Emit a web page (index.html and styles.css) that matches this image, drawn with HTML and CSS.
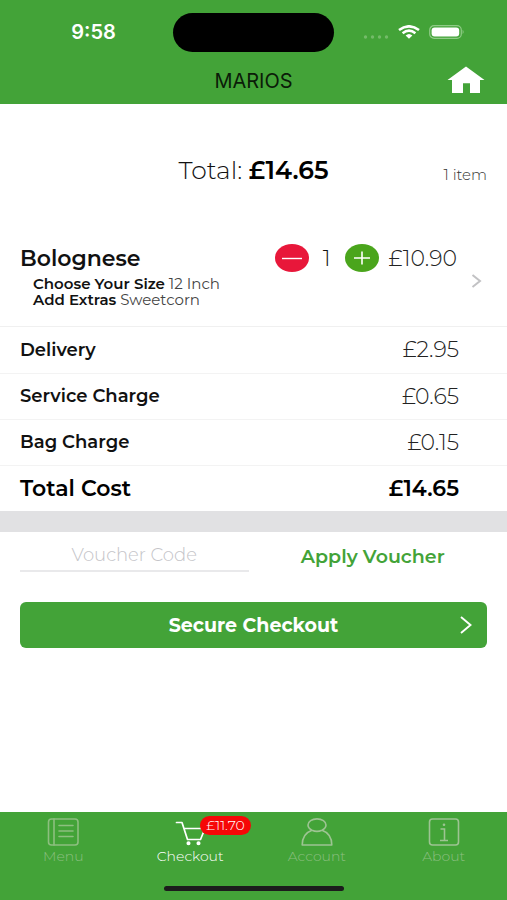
FILE: index.html
```html
<!DOCTYPE html>
<html lang="en">
<head>
<meta charset="utf-8">
<meta name="viewport" content="width=device-width, initial-scale=1">
<title>Marios – Checkout</title>
<link rel="stylesheet" href="styles.css">
</head>
<body>
<header class="top">
  <div class="status">
    <span class="time">9:58</span>
    <span class="island"></span>
    <span class="signals">
      <svg width="26" height="6" viewBox="0 0 26 6" fill="#74bb69"><circle cx="2.5" cy="3" r="1.7"/><circle cx="9.5" cy="3" r="1.7"/><circle cx="16.5" cy="3" r="1.7"/><circle cx="23.5" cy="3" r="1.7"/></svg>
      <svg class="wifi" width="22" height="14" viewBox="0 0 22 14" fill="none" stroke="#fff" stroke-width="2.6"><path d="M1 5Q11-2.4 21 5"/><path d="M4.6 8.2Q11 3.2 17.4 8.2"/><path d="M7.6 10.4Q11 7.4 14.4 10.4L11 13.8Z" fill="#fff" stroke="none"/></svg>
      <svg width="36" height="14" viewBox="0 0 36 14"><rect x=".7" y=".7" width="31.6" height="12.6" rx="4.4" fill="none" stroke="#8fcb86" stroke-width="1.2"/><rect x="2.6" y="2.4" width="27.6" height="9.2" rx="3" fill="#fff"/><path d="M33.6 4.8Q35.6 7 33.6 9.2Z" fill="#8fcb86"/></svg>
    </span>
  </div>
  <div class="titlebar">
    <h1>MARIOS</h1>
    <a class="home" href="#home" aria-label="Home">
      <svg width="38" height="28" viewBox="0 0 38 28" fill="#fff"><path d="M19 .5L37.5 14H33V27H23V17.2H16V27H5V14H.5Z"/></svg>
    </a>
  </div>
</header>

<main>
  <section class="summary">
    <p class="total">Total: <b>£14.65</b></p>
    <p class="count">1 item</p>
  </section>

  <section class="item">
    <div class="item-row">
      <h2>Bolognese</h2>
      <div class="qty">
        <button class="round minus" type="button" aria-label="Remove one"><svg width="22" height="14" viewBox="0 0 22 14" stroke="#fff" stroke-width="1.4"><path d="M1 7.500H21"/></svg></button>
        <span class="num">1</span>
        <button class="round plus" type="button" aria-label="Add one"><svg width="18" height="14" viewBox="0 0 18 14" stroke="#fff" stroke-width="1.6"><path d="M1 7H17M9 .5V13.5"/></svg></button>
      </div>
      <span class="price">£10.90</span>
    </div>
    <div class="options">
      <p><b>Choose Your Size</b> 12 Inch</p>
      <p><b>Add Extras</b> Sweetcorn</p>
    </div>
    <a class="more" href="#item" aria-label="Edit item"><svg width="12" height="14" viewBox="0 0 12 14" fill="none" stroke="#c2c2c4" stroke-width="2"><path d="M1.5 1L9 7L1.5 13"/></svg></a>
  </section>

  <table class="costs">
    <tbody>
      <tr><th scope="row">Delivery</th><td>£2.95</td></tr>
      <tr><th scope="row">Service Charge</th><td>£0.65</td></tr>
      <tr><th scope="row">Bag Charge</th><td>£0.15</td></tr>
      <tr class="grand"><th scope="row">Total Cost</th><td>£14.65</td></tr>
    </tbody>
  </table>

  <div class="band"></div>

  <form class="voucher">
    <input type="text" placeholder="Voucher Code" aria-label="Voucher Code">
    <button type="button">Apply Voucher</button>
  </form>

  <button class="checkout" type="button">
    <span>Secure Checkout</span>
    <svg width="12" height="18" viewBox="0 0 12 18" fill="none" stroke="#fff" stroke-width="1.9"><path d="M1 1L10.5 9L1 17"/></svg>
  </button>
</main>

<footer class="bottom">
  <nav>
    <a href="#menu">
      <svg width="32" height="28" viewBox="0 0 32 28" fill="none" stroke="#8dbf7f" stroke-width="1.6" stroke-linecap="round"><rect x="1.500" y="1" width="29.5" height="26" rx="3"/><path d="M7 1V27M12 7.5H26M12 13H26M12 18.500H26"/></svg>
      Menu
    </a>
    <a class="active" href="#checkout">
      <svg width="32" height="28" viewBox="0 0 32 28" fill="none" stroke="#fff" stroke-width="1.7" stroke-linecap="round" stroke-linejoin="round"><path d="M2.500 4.500H8L13.500 21.500H26.500L31 10.500H10"/><circle cx="14.500" cy="25.300" r="1.200" fill="#fff"/><circle cx="24.500" cy="25.300" r="1.200" fill="#fff"/></svg>
      Checkout
      <span class="badge">£11.70</span>
    </a>
    <a href="#account">
      <svg width="32" height="28" viewBox="0 0 32 28" fill="none" stroke="#9dc492" stroke-width="1.6" stroke-linejoin="round"><path d="M11 12.200C7.800 10.500 7 8.500 7 7C7 3.500 11 .9 16 .9C21 .9 25 3.500 25 7C25 8.500 24.200 10.500 21 12.200C18 13.600 14 13.600 11 12.200C4.500 14.500 1.200 19 1.200 27H30.800C30.800 19 27.500 14.500 21 12.200"/></svg>
      Account
    </a>
    <a href="#about">
      <svg width="32" height="28" viewBox="0 0 32 28" fill="none" stroke="#9dc492" stroke-width="1.600"><rect x="1.500" y="1" width="29" height="26" rx="3"/><path d="M12.500 11H16.500V22M12 22.500H20"/><circle cx="16" cy="6.800" r="1.300" fill="#9dc492" stroke="none"/></svg>
      About
    </a>
  </nav>
  <div class="indicator"></div>
</footer>
</body>
</html>
```
FILE: styles.css
```css
* { box-sizing: border-box; }

body {
  margin: 0;
  min-height: 100vh;
  display: flex;
  flex-direction: column;
  background: #fff;
  color: #111;
  font-family: Montserrat, Inter, "Open Sans", sans-serif;
}

h1, h2, p { margin: 0; font-weight: 400; }

button {
  border: 0;
  padding: 0;
  background: none;
  font-family: inherit;
  cursor: pointer;
}

a { color: inherit; text-decoration: none; }
svg { display: block; flex: none; }

.top { background: #43a338; }

.status {
  display: grid;
  grid-template-columns: 1fr 161px 1fr;
  align-items: center;
  height: 64px;
}

.time {
  justify-self: center;
  padding-left: 14px;
  color: #fff;
  font-family: Inter, sans-serif;
  font-size: 20px;
  font-weight: 600;
}

.island {
  height: 39px;
  border-radius: 20px;
  background: #000;
}

.signals {
  display: flex;
  align-items: center;
  gap: 9px;
  padding-left: 29px;
}

.signals svg:first-child { margin-top: 10px; }

.titlebar {
  display: grid;
  grid-template-columns: 1fr auto 1fr;
  align-items: center;
  height: 40px;
  padding: 0 22px 8px;
}

h1 {
  grid-column: 2;
  padding-top: 2px;
  color: #0b1c08;
  font-family: Inter, sans-serif;
  font-size: 20px;
  line-height: 24px;
}

.home { justify-self: end; }

main { flex: 1; }

.summary {
  display: grid;
  grid-template-columns: 1fr auto 1fr;
  align-items: center;
  height: 132px;
  padding: 0 20px;
}

.total {
  grid-column: 2;
  font-size: 25px;
  font-weight: 300;
}

.total b { color: #000; font-weight: 600; }

.count {
  justify-self: end;
  padding-top: 8px;
  color: #333;
  font-size: 15px;
  font-weight: 300;
}

.item {
  display: grid;
  grid-template-columns: 1fr auto;
  grid-template-rows: 28px 1fr;
  height: 91px;
  padding: 8px 20px 0;
  border-bottom: 1px solid #f0f0f0;
}

.item-row {
  grid-column: 1 / 3;
  display: flex;
  align-items: center;
  padding-right: 30px;
}

h2 {
  flex: 1;
  font-size: 22px;
  font-weight: 600;
}

.qty { display: flex; align-items: center; }

.num {
  width: 36px;
  text-align: center;
  font-size: 22px;
  font-weight: 300;
}

.round {
  display: grid;
  place-items: center;
  width: 34px;
  height: 28px;
  border-radius: 50%;
}

.minus { background: #e8173a; }
.plus { background: #4aa51c; }

.price {
  padding-left: 10px;
  color: #222;
  font-size: 22px;
  font-weight: 300;
}

.options {
  padding: 4px 0 0 13px;
  color: #444;
  font-size: 15px;
  font-weight: 300;
  line-height: 16px;
}

.options b { color: #111; font-weight: 600; }
.more { padding: 2px 4px 0 0; }

.costs {
  width: 100%;
  border-collapse: collapse;
}

.costs tr { height: 46px; border-bottom: 1px solid #f3f3f3; }
.costs .grand { border-bottom: 0; }

.costs th {
  padding: 0 0 0 20px;
  text-align: left;
  font-size: 18px;
  font-weight: 600;
}

.costs td {
  padding: 0 48px 0 0;
  color: #222;
  text-align: right;
  font-size: 22px;
  font-weight: 300;
}

.costs .grand th, .costs .grand td {
  color: #000;
  font-size: 22px;
  font-weight: 600;
}

.band { height: 21px; background: #e1e1e3; }

.voucher {
  display: grid;
  grid-template-columns: 1fr 1fr;
  gap: 10px;
  padding: 8px 20px 0;
}

.voucher input {
  width: 100%;
  height: 32px;
  padding: 0;
  border: 0;
  border-bottom: 2px solid #e9e9eb;
  background: none;
  font-family: inherit;
  font-size: 18px;
  font-weight: 300;
  text-align: center;
}

.voucher input::placeholder { color: #c4c4c8; }

.voucher button {
  height: 32px;
  color: #43a338;
  font-size: 19px;
  font-weight: 600;
}

.checkout {
  display: grid;
  grid-template-columns: 1fr auto 1fr;
  align-items: center;
  width: calc(100% - 40px);
  height: 46px;
  margin: 30px 20px;
  padding: 0 15px;
  border-radius: 6px;
  background: #43a338;
  color: #fff;
  font-size: 19px;
  font-weight: 700;
}

.checkout span { grid-column: 2; }
.checkout svg { justify-self: end; }

.bottom {
  padding: 6px 0 9px;
  background: #43a338;
}

nav {
  display: grid;
  grid-template-columns: repeat(4, 1fr);
}

nav a {
  position: relative;
  display: flex;
  flex-direction: column;
  align-items: center;
  gap: 2px;
  color: #8cbf81;
  font-size: 14px;
  font-weight: 300;
  line-height: 16px;
}

nav .active { color: #fff; }

.badge {
  position: absolute;
  left: 50%;
  top: -2px;
  margin-left: 10px;
  padding: 0 6px;
  border-radius: 10px;
  background: #f60707;
  font-size: 14px;
  line-height: 19px;
}

.indicator {
  width: 180px;
  height: 5px;
  margin: 22px auto 0;
  border-radius: 3px;
  background: #1c1c1c;
}
```
